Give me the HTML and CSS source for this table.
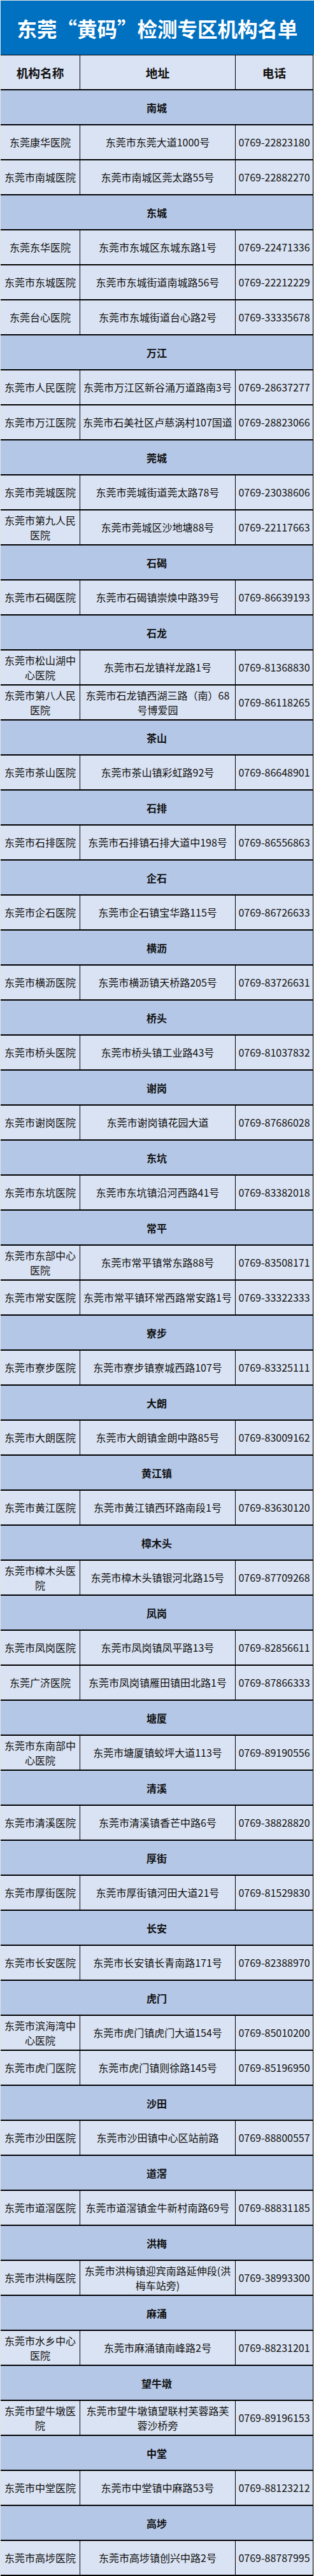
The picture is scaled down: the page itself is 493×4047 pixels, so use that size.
FILE: index.html
```html
<!DOCTYPE html>
<html lang="zh-CN">
<head>
<meta charset="utf-8">
<title>东莞“黄码”检测专区机构名单</title>
<link rel="stylesheet" href="styles.css">
</head>
<body>
<div class="sheet">
  <div class="title">东莞<span class="q">“</span>黄码<span class="q">”</span>检测专区机构名单</div>
  <div class="table">
    <div class="row head"><div class="cell">机构名称</div><div class="cell">地址</div><div class="cell">电话</div></div>

    <div class="section">南城</div>
    <div class="row"><div class="cell">东莞康华医院</div><div class="cell">东莞市东莞大道1000号</div><div class="cell">0769-22823180</div></div>
    <div class="row"><div class="cell">东莞市南城医院</div><div class="cell">东莞市南城区莞太路55号</div><div class="cell">0769-22882270</div></div>

    <div class="section">东城</div>
    <div class="row"><div class="cell">东莞东华医院</div><div class="cell">东莞市东城区东城东路1号</div><div class="cell">0769-22471336</div></div>
    <div class="row"><div class="cell">东莞市东城医院</div><div class="cell">东莞市东城街道南城路56号</div><div class="cell">0769-22212229</div></div>
    <div class="row"><div class="cell">东莞台心医院</div><div class="cell">东莞市东城街道台心路2号</div><div class="cell">0769-33335678</div></div>

    <div class="section">万江</div>
    <div class="row"><div class="cell">东莞市人民医院</div><div class="cell">东莞市万江区新谷涌万道路南3号</div><div class="cell">0769-28637277</div></div>
    <div class="row"><div class="cell">东莞市万江医院</div><div class="cell">东莞市石美社区卢慈涡村107国道</div><div class="cell">0769-28823066</div></div>

    <div class="section">莞城</div>
    <div class="row"><div class="cell">东莞市莞城医院</div><div class="cell">东莞市莞城街道莞太路78号</div><div class="cell">0769-23038606</div></div>
    <div class="row"><div class="cell">东莞市第九人民医院</div><div class="cell">东莞市莞城区沙地塘88号</div><div class="cell">0769-22117663</div></div>

    <div class="section">石碣</div>
    <div class="row"><div class="cell">东莞市石碣医院</div><div class="cell">东莞市石碣镇崇焕中路39号</div><div class="cell">0769-86639193</div></div>

    <div class="section">石龙</div>
    <div class="row"><div class="cell">东莞市松山湖中心医院</div><div class="cell">东莞市石龙镇祥龙路1号</div><div class="cell">0769-81368830</div></div>
    <div class="row"><div class="cell">东莞市第八人民医院</div><div class="cell">东莞市石龙镇西湖三路（南）68号博爱园</div><div class="cell">0769-86118265</div></div>

    <div class="section">茶山</div>
    <div class="row"><div class="cell">东莞市茶山医院</div><div class="cell">东莞市茶山镇彩虹路92号</div><div class="cell">0769-86648901</div></div>

    <div class="section">石排</div>
    <div class="row"><div class="cell">东莞市石排医院</div><div class="cell">东莞市石排镇石排大道中198号</div><div class="cell">0769-86556863</div></div>

    <div class="section">企石</div>
    <div class="row"><div class="cell">东莞市企石医院</div><div class="cell">东莞市企石镇宝华路115号</div><div class="cell">0769-86726633</div></div>

    <div class="section">横沥</div>
    <div class="row"><div class="cell">东莞市横沥医院</div><div class="cell">东莞市横沥镇天桥路205号</div><div class="cell">0769-83726631</div></div>

    <div class="section">桥头</div>
    <div class="row"><div class="cell">东莞市桥头医院</div><div class="cell">东莞市桥头镇工业路43号</div><div class="cell">0769-81037832</div></div>

    <div class="section">谢岗</div>
    <div class="row"><div class="cell">东莞市谢岗医院</div><div class="cell">东莞市谢岗镇花园大道</div><div class="cell">0769-87686028</div></div>

    <div class="section">东坑</div>
    <div class="row"><div class="cell">东莞市东坑医院</div><div class="cell">东莞市东坑镇沿河西路41号</div><div class="cell">0769-83382018</div></div>

    <div class="section">常平</div>
    <div class="row"><div class="cell">东莞市东部中心医院</div><div class="cell">东莞市常平镇常东路88号</div><div class="cell">0769-83508171</div></div>
    <div class="row"><div class="cell">东莞市常安医院</div><div class="cell">东莞市常平镇环常西路常安路1号</div><div class="cell">0769-33322333</div></div>

    <div class="section">寮步</div>
    <div class="row"><div class="cell">东莞市寮步医院</div><div class="cell">东莞市寮步镇寮城西路107号</div><div class="cell">0769-83325111</div></div>

    <div class="section">大朗</div>
    <div class="row"><div class="cell">东莞市大朗医院</div><div class="cell">东莞市大朗镇金朗中路85号</div><div class="cell">0769-83009162</div></div>

    <div class="section">黄江镇</div>
    <div class="row"><div class="cell">东莞市黄江医院</div><div class="cell">东莞市黄江镇西环路南段1号</div><div class="cell">0769-83630120</div></div>

    <div class="section">樟木头</div>
    <div class="row"><div class="cell">东莞市樟木头医院</div><div class="cell">东莞市樟木头镇银河北路15号</div><div class="cell">0769-87709268</div></div>

    <div class="section">凤岗</div>
    <div class="row"><div class="cell">东莞市凤岗医院</div><div class="cell">东莞市凤岗镇凤平路13号</div><div class="cell">0769-82856611</div></div>
    <div class="row"><div class="cell">东莞广济医院</div><div class="cell">东莞市凤岗镇雁田镇田北路1号</div><div class="cell">0769-87866333</div></div>

    <div class="section">塘厦</div>
    <div class="row"><div class="cell">东莞市东南部中心医院</div><div class="cell">东莞市塘厦镇蛟坪大道113号</div><div class="cell">0769-89190556</div></div>

    <div class="section">清溪</div>
    <div class="row"><div class="cell">东莞市清溪医院</div><div class="cell">东莞市清溪镇香芒中路6号</div><div class="cell">0769-38828820</div></div>

    <div class="section">厚街</div>
    <div class="row"><div class="cell">东莞市厚街医院</div><div class="cell">东莞市厚街镇河田大道21号</div><div class="cell">0769-81529830</div></div>

    <div class="section">长安</div>
    <div class="row"><div class="cell">东莞市长安医院</div><div class="cell">东莞市长安镇长青南路171号</div><div class="cell">0769-82388970</div></div>

    <div class="section">虎门</div>
    <div class="row"><div class="cell">东莞市滨海湾中心医院</div><div class="cell">东莞市虎门镇虎门大道154号</div><div class="cell">0769-85010200</div></div>
    <div class="row"><div class="cell">东莞市虎门医院</div><div class="cell">东莞市虎门镇则徐路145号</div><div class="cell">0769-85196950</div></div>

    <div class="section">沙田</div>
    <div class="row"><div class="cell">东莞市沙田医院</div><div class="cell">东莞市沙田镇中心区站前路</div><div class="cell">0769-88800557</div></div>

    <div class="section">道滘</div>
    <div class="row"><div class="cell">东莞市道滘医院</div><div class="cell">东莞市道滘镇金牛新村南路69号</div><div class="cell">0769-88831185</div></div>

    <div class="section">洪梅</div>
    <div class="row"><div class="cell">东莞市洪梅医院</div><div class="cell">东莞市洪梅镇迎宾南路延伸段(洪梅车站旁)</div><div class="cell">0769-38993300</div></div>

    <div class="section">麻涌</div>
    <div class="row"><div class="cell">东莞市水乡中心医院</div><div class="cell">东莞市麻涌镇南峰路2号</div><div class="cell">0769-88231201</div></div>

    <div class="section">望牛墩</div>
    <div class="row"><div class="cell">东莞市望牛墩医院</div><div class="cell">东莞市望牛墩镇望联村芙蓉路芙蓉沙桥旁</div><div class="cell">0769-89196153</div></div>

    <div class="section">中堂</div>
    <div class="row"><div class="cell">东莞市中堂医院</div><div class="cell">东莞市中堂镇中麻路53号</div><div class="cell">0769-88123212</div></div>

    <div class="section">高埗</div>
    <div class="row"><div class="cell">东莞市高埗医院</div><div class="cell">东莞市高埗镇创兴中路2号</div><div class="cell">0769-88787995</div></div>
  </div>
</div>
</body>
</html>
```
FILE: styles.css
```css
html, body {
  margin: 0;
  padding: 0;
}
body {
  background: #e4e4e4;
  font-family: "Noto Sans CJK SC", "Noto Sans", sans-serif;
  color: #111;
}
.sheet {
  margin: 1px 0 0 1px;
  width: 492px;
}
.title {
  height: 85px;
  background: #0070c0;
  color: #fff;
  font-size: 31.5px;
  font-weight: 700;
  display: flex;
  align-items: center;
  justify-content: center;
  white-space: nowrap;
}
.title .q {
  font-feature-settings: "fwid" 1;
}
.table {
  width: 491px;
  border-top: 1px solid #000;
}
.row {
  display: grid;
  grid-template-columns: 125px 244px 121px;
  height: 55px;
  box-sizing: border-box;
  border-bottom: 2px solid #000;
  border-right: 1px solid #000;
  background: #dae3f3;
}
.cell {
  display: flex;
  align-items: center;
  justify-content: center;
  text-align: center;
  padding: 0 2px;
  border-right: 1px solid #000;
  font-size: 16px;
  line-height: 23px;
  overflow: hidden;
}
.cell:last-child {
  border-right: none;
}
.head .cell {
  font-size: 18.7px;
  font-weight: 700;
}
.section {
  height: 55px;
  box-sizing: border-box;
  border-bottom: 2px solid #000;
  border-right: 1px solid #000;
  background: #b4c7e7;
  display: flex;
  align-items: center;
  justify-content: center;
  font-size: 16px;
  font-weight: 700;
}
```
